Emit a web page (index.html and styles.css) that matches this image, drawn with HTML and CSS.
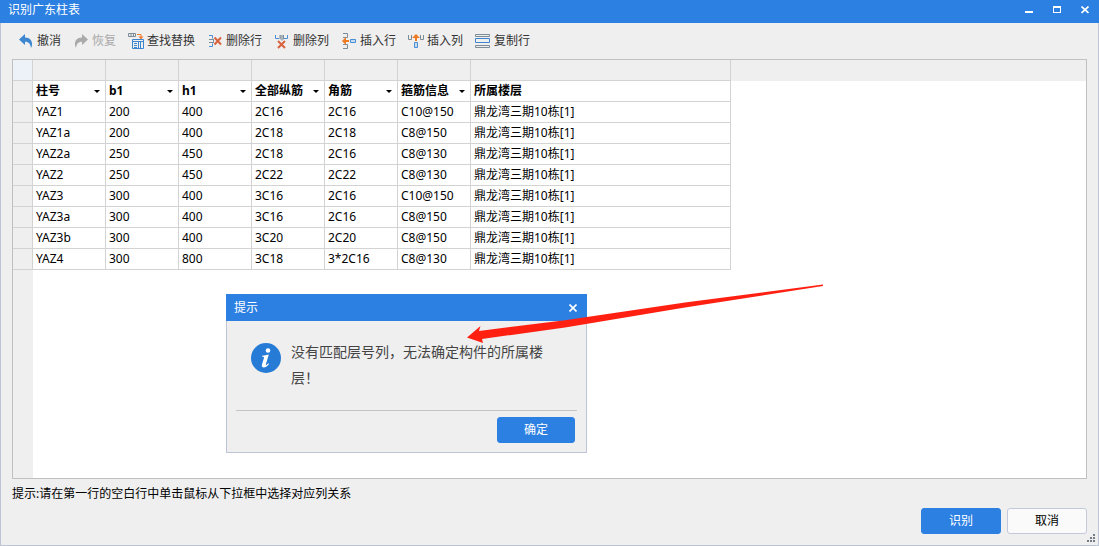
FILE: index.html
```html
<!DOCTYPE html>
<html lang="zh-CN">
<head>
<meta charset="utf-8">
<title>识别广东柱表</title>
<link rel="stylesheet" href="styles.css">
</head>
<body>
<main class="window">
  <header class="titlebar">
    <h1 class="title">识别广东柱表</h1>
    <div class="window-controls">
      <button class="control" type="button" aria-label="最小化"><svg width="8" height="8" shape-rendering="crispEdges"><path d="M0 5h8v2H0z" fill="#fff"/></svg></button>
      <button class="control" type="button" aria-label="最大化"><svg width="8" height="8" shape-rendering="crispEdges"><path fill-rule="evenodd" d="M0 0h8v7H0zM1 2v4h6V2z" fill="#fff"/></svg></button>
      <button class="control" type="button" aria-label="关闭"><svg width="8" height="8"><path d="M.5 .5l7 6.500M7.500 .5l-7 6.500" stroke="#fff" stroke-width="1.700"/></svg></button>
    </div>
  </header>

  <div class="toolbar" role="toolbar">
    <button class="tool" type="button"><svg width="16" height="16"><path d="M1 6.500L7 1v3.500c5 0 7.500 3.500 7 7.500-.2 1.300-.6 2.200-1 3C12.500 11 11 8.700 7 8.700V12z" fill="#3e87d0"/></svg>撤消</button>
    <button class="tool" type="button" disabled><svg width="16" height="16"><path d="M15 6.500L9 1v3.500c-5 0-7.500 3.500-7 7.500.2 1.300.6 2.200 1 3C3.500 11 5 8.700 9 8.700V12z" fill="#aaa"/></svg>恢复</button>
    <button class="tool" type="button"><svg width="16" height="16" fill="none"><path d="M.5 .5h7v3h-7zM3 .5v3M5.500 .5v3" stroke="#7c8b96"/><path d="M9 1.500h4v3" stroke="#ee7d2e"/><path d="M10.500 3.500h5L13 6.500z" fill="#ee7d2e"/><path d="M4.500 6.500h11v9h-11z" stroke="#3e87d0"/><path d="M4.500 8.500h11M6 10.500h3M6 12.500h3M6 14.500h3M10.500 8v7M12.500 8v7" stroke="#3e87d0"/></svg>查找替换</button>
    <button class="tool" type="button"><svg width="16" height="16" fill="none"><path d="M2 2.500h3.500v3M2 13.500h3.500v-3" stroke="#4a8fd6"/><path d="M2 6.500h5M2 9.500h5M6.500 6v4" stroke="#7c8b96"/><path d="M7.500 4.500l6.500 7M14 4.500l-6.500 7" stroke="#d9623f" stroke-width="2"/></svg>删除行</button>
    <button class="tool" type="button"><svg width="16" height="16" fill="none"><path d="M1.500 2v3.500H5M13.500 2v3.500H10" stroke="#4a8fd6"/><path d="M6 2h4v4L8 8 6 6z" fill="#aab4bc"/><path d="M6 2v4M9.500 2v4" stroke="#7c8b96"/><path d="M4 8l7 7M11 8l-7 7" stroke="#d9623f" stroke-width="2"/></svg>删除列</button>
    <button class="tool" type="button"><svg width="16" height="16" fill="none"><path d="M2 .5h4.500v4H2M2 15.500h4.500v-4H2" stroke="#7c8b96"/><path d="M1 8l4-4v3h3v2H5v3z" fill="#f07a22"/><path d="M9.500 6.500h5v3h-5z" stroke="#4a8fd6" fill="#c5dcf2"/></svg>插入行</button>
    <button class="tool" type="button"><svg width="16" height="16" fill="none"><path d="M.5 2v4.500h3V2M12.500 2v4.500h3V2" stroke="#7c8b96"/><path d="M8 1l4 4H9v3H7V5H4z" fill="#f07a22"/><path d="M6.500 9.500h3v5h-3z" stroke="#4a8fd6" fill="#c5dcf2"/></svg>插入列</button>
    <button class="tool" type="button"><svg width="16" height="16" fill="none"><path d="M.5 1.500h14v2H.5zM.5 12.500h14v2H.5z" stroke="#7c8b96"/><path d="M.5 5.500h14v4H.5z" stroke="#3e87d0"/></svg>复制行</button>
  </div>

  <section class="grid-frame">
    <table class="grid">
      <colgroup><col class="col-handle"><col class="col-data" span="6"><col class="col-floor"></colgroup>
      <thead>
        <tr class="mapping"><td class="corner"></td><td></td><td></td><td></td><td></td><td></td><td></td><td></td></tr>
        <tr>
          <td class="handle"></td>
          <th scope="col"><div class="picker"><select aria-label="第1列"><option>柱号</option></select></div></th>
          <th scope="col"><div class="picker"><select aria-label="第2列"><option>b1</option></select></div></th>
          <th scope="col"><div class="picker"><select aria-label="第3列"><option>h1</option></select></div></th>
          <th scope="col"><div class="picker"><select aria-label="第4列"><option>全部纵筋</option></select></div></th>
          <th scope="col"><div class="picker"><select aria-label="第5列"><option>角筋</option></select></div></th>
          <th scope="col"><div class="picker"><select aria-label="第6列"><option>箍筋信息</option></select></div></th>
          <th scope="col">所属楼层</th>
        </tr>
      </thead>
      <tbody>
        <tr><td class="handle"></td><td>YAZ1</td><td>200</td><td>400</td><td>2C16</td><td>2C16</td><td>C10@150</td><td>鼎龙湾三期10栋[1]</td></tr>
        <tr><td class="handle"></td><td>YAZ1a</td><td>200</td><td>400</td><td>2C18</td><td>2C18</td><td>C8@150</td><td>鼎龙湾三期10栋[1]</td></tr>
        <tr><td class="handle"></td><td>YAZ2a</td><td>250</td><td>450</td><td>2C18</td><td>2C16</td><td>C8@130</td><td>鼎龙湾三期10栋[1]</td></tr>
        <tr><td class="handle"></td><td>YAZ2</td><td>250</td><td>450</td><td>2C22</td><td>2C22</td><td>C8@130</td><td>鼎龙湾三期10栋[1]</td></tr>
        <tr><td class="handle"></td><td>YAZ3</td><td>300</td><td>400</td><td>3C16</td><td>2C16</td><td>C10@150</td><td>鼎龙湾三期10栋[1]</td></tr>
        <tr><td class="handle"></td><td>YAZ3a</td><td>300</td><td>400</td><td>3C16</td><td>2C16</td><td>C8@150</td><td>鼎龙湾三期10栋[1]</td></tr>
        <tr><td class="handle"></td><td>YAZ3b</td><td>300</td><td>400</td><td>3C20</td><td>2C20</td><td>C8@150</td><td>鼎龙湾三期10栋[1]</td></tr>
        <tr><td class="handle"></td><td>YAZ4</td><td>300</td><td>800</td><td>3C18</td><td>3*2C16</td><td>C8@130</td><td>鼎龙湾三期10栋[1]</td></tr>
      </tbody>
    </table>
  </section>

  <p class="hint">提示:请在第一行的空白行中单击鼠标从下拉框中选择对应列关系</p>
  <footer class="actions">
    <button class="button primary" type="button">识别</button>
    <button class="button" type="button">取消</button>
  </footer>
  <svg class="grip" width="8" height="8" fill="#747c85" shape-rendering="crispEdges" aria-hidden="true"><path d="M6 0h2v2H6zM3 3h2v2H3zM6 3h2v2H6zM0 6h2v2H0zM3 6h2v2H3zM6 6h2v2H6z"/></svg>

  <div class="dialog" role="dialog" aria-labelledby="dialog-title">
    <div class="dialog-bar">
      <h2 class="title" id="dialog-title">提示</h2>
      <button class="control" type="button" aria-label="关闭"><svg width="8" height="8"><path d="M.5 .5l7 7M7.500 .5l-7 7" stroke="#fff" stroke-width="1.600"/></svg></button>
    </div>
    <div class="message">
      <svg class="info" width="30" height="30" viewBox="0 0 30 30" aria-hidden="true"><circle cx="15" cy="15" r="15" fill="#267bd6"/><circle cx="17" cy="7.500" r="2.300" fill="#fff"/><path d="M11.200 12.800c2.300-.2 4.200-.7 6.600-1.300l-2.900 9.800c-.3 1.200.4 1.100 2.600-1l.6.700c-2 2.500-3.600 3.500-5.300 3.500-1.900 0-2.400-1.300-1.800-3.200l1.900-6.100c.3-1.100 0-1.400-1.700-1.500z" fill="#fff"/></svg>
      <p class="message-text">没有匹配层号列，无法确定构件的所属楼层！</p>
    </div>
    <div class="dialog-actions"><button class="button primary" type="button">确定</button></div>
  </div>

  <svg class="arrow" width="360" height="62" aria-hidden="true"><path d="M2 54.500L15.500 43 14 48 100 37.200 220 19.500 358 1.500V3L220 24.500 100 44.500 17 56 18 60z" fill="#ff2012"/></svg>
</main>
</body>
</html>
```

FILE: styles.css
```css
* {
  box-sizing: border-box;
}

body {
  margin: 0;
  font-family: "Noto Sans", "Noto Sans CJK SC", sans-serif;
  font-size: 12px;
  line-height: 20px;
  color: #000;
}

button,
select {
  margin: 0;
  padding: 0;
  border: 0;
  background: none;
  color: inherit;
  font: inherit;
}

h1,
h2,
p {
  margin: 0;
}

svg {
  display: block;
  flex: none;
}

.window {
  position: relative;
  display: flex;
  flex-direction: column;
  min-height: 100vh;
  background: #efefef;
  border: 1px solid #bcc4d6;
  border-top: 0;
}

.titlebar,
.dialog-bar {
  display: flex;
  align-items: center;
  justify-content: space-between;
  background: #2c80e2;
  color: #fff;
}

.titlebar {
  height: 23px;
  margin: 0 -1px;
  padding: 0 0 3px 8px;
}

.title {
  font-size: 12px;
  font-weight: 400;
}

.window-controls {
  display: flex;
}

.control {
  display: flex;
  align-items: center;
  justify-content: center;
  width: 28px;
  height: 20px;
}

.toolbar {
  display: flex;
  gap: 12px;
  align-items: center;
  height: 36px;
  padding: 0 17px;
}

.tool {
  display: flex;
  gap: 3px;
  align-items: center;
  color: #333;
  white-space: nowrap;
}

.tool:disabled {
  color: #aaa;
}

.grid-frame {
  flex: 1;
  margin: 0 11px;
  border: 1px solid #c0c0c0;
  background:
    linear-gradient(#efefef, #efefef) 0 0 / 100% 21px no-repeat,
    linear-gradient(#efefef, #efefef) 0 0 / 20px 100% no-repeat,
    #fff;
}

.grid {
  width: 718px;
  table-layout: fixed;
  border-spacing: 0;
}

.col-handle {
  width: 20px;
}

.col-data {
  width: 73px;
}

.grid td,
.grid th {
  height: 21px;
  padding: 0 3px;
  border: 0 solid #d3d3d3;
  border-width: 0 1px 1px 0;
  background: #fff;
  text-align: left;
  white-space: nowrap;
}

.grid .mapping td,
.grid .handle {
  background: #efefef;
}

.grid .mapping .corner {
  background: #edf1f8;
}

.picker {
  display: flex;
  align-items: center;
}

.picker::after {
  content: "";
  flex: none;
  margin-right: 2px;
  border: 3px solid transparent;
  border-top-color: #000;
  border-bottom: 0;
}

.picker select {
  flex: 1;
  min-width: 0;
  appearance: none;
  height: 20px;
  font-weight: 700;
}

.hint {
  height: 29px;
  padding: 0 11px;
  line-height: 30px;
}

.actions {
  display: flex;
  gap: 6px;
  justify-content: flex-end;
  padding: 0 11px 11px;
}

.button {
  width: 80px;
  height: 26px;
  border: 1px solid #c2c9da;
  border-radius: 3px;
  background: #fafafa;
}

.button.primary {
  border-color: #2c80e2;
  background: #2c80e2;
  color: #fff;
}

.grip {
  position: absolute;
  right: 3px;
  bottom: 3px;
}

.dialog {
  position: absolute;
  top: 294px;
  left: 225px;
  width: 361px;
  border: 1px solid #bcc4d6;
  border-top: 0;
  background: #efefef;
}

.dialog-bar {
  height: 27px;
  margin: 0 -1px;
  padding-left: 8px;
}

.message {
  display: flex;
  gap: 10px;
  padding: 18px 36px 19px 24px;
}

.info {
  margin-top: 4px;
}

.message-text {
  font-size: 14px;
  line-height: 26px;
  color: #444;
}

.dialog-actions {
  display: flex;
  justify-content: flex-end;
  margin: 0 9px;
  padding: 6px 2px 9px;
  border-top: 1px solid #c4c4c4;
}

.dialog-actions .button {
  width: 78px;
}

.arrow {
  position: absolute;
  top: 283px;
  left: 464px;
  pointer-events: none;
}
```
